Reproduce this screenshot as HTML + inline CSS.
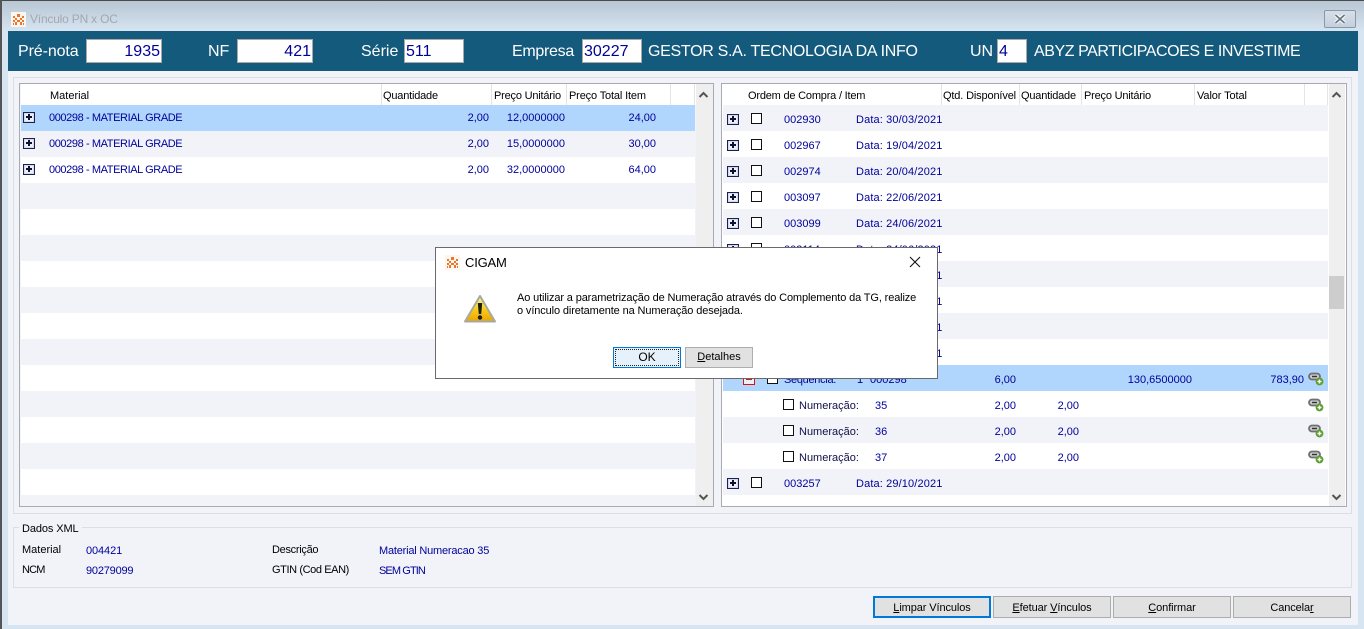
<!DOCTYPE html>
<html><head><meta charset="utf-8">
<style>
html,body{margin:0;padding:0;width:1364px;height:629px;overflow:hidden;background:#d7e5f2}
body{font-family:"Liberation Sans",sans-serif;font-size:11px;position:relative;color:#000}
div,span,svg{position:absolute;box-sizing:border-box}
.t{white-space:nowrap;line-height:14px;height:14px;margin-top:1px}
.b{color:#00009a}
.r{text-align:right}
.h{color:#fff;font-size:16px;line-height:20px;height:20px;top:42px;white-space:nowrap}
.f{background:#fff;border:1px solid #a9a9a9;height:24px;top:39px;color:#00009a;font-size:16px;line-height:24px;padding:0 1px}
.row{height:26px}
.g{background:#f1f3f9}.w{background:#fff}.s{background:#b0d6fd}
.sep{width:1px;height:21px;top:84px;background:#e4e4e4}
.px{width:12px;height:11px;border:1px solid #1a2050;background:#eef0f8;box-shadow:inset 0 0 0 1px #d4d8ec}
.px:before{content:"";position:absolute;left:2px;top:3px;width:6px;height:2px;background:#101030}
.px:after{content:"";position:absolute;left:4px;top:1px;width:2px;height:6px;background:#101030}
.ck{width:11px;height:11px;border:1px solid #111;background:#fff}
.btn{top:596px;height:22px;width:118px;background:#e1e1e1;border:1px solid #adadad;text-align:center;line-height:22px;white-space:nowrap;letter-spacing:-.1px}
.d{letter-spacing:.13px}
u{text-decoration:underline}
</style></head>
<body>
<!-- window frame -->
<div style="left:0;top:0;width:1364px;height:31px;background:linear-gradient(#b7c6d4,#d6e4f1)"></div>
<div style="left:0;top:0;width:1364px;height:1px;background:#4a4a4a"></div>
<div style="left:0;top:0;width:2px;height:629px;background:#555"></div>
<div style="left:8px;top:71px;width:1350px;height:554px;background:#f1f3f9"></div>
<div style="left:11px;top:12px;width:15px;height:15px;background:#fbf6f0"></div>
<svg style="left:12px;top:13px" width="13" height="13" viewBox="0 0 13 13"><path d="M5 1h3v2H5zM1 3h2v2H1zM10 3h2v2h-2zM3 5h2v2H3zM8 5h2v2H8zM5 3h3v1H5zM5 7h3v2H5zM1 7h2v2H1zM10 7h2v2h-2zM3 9h2v3H3zM8 9h2v3H8zM1 10h1v2H1zM11 10h1v2h-1z" fill="#ee7528"/></svg>
<div class="t" style="left:30px;top:11px;color:#a3a8ad;font-size:12px;letter-spacing:-.2px">Vínculo PN x OC</div>
<div style="left:1324px;top:10px;width:32px;height:18px;border:1px solid #8b97a5;border-radius:2px;background:linear-gradient(#d7e0e9,#c3d0dd)"></div>
<svg style="left:1333px;top:13px" width="14" height="12" viewBox="0 0 14 12"><path d="M2.5 2l9 8M11.5 2l-9 8" stroke="#fff" stroke-width="3.6" fill="none"/><path d="M2.5 2l9 8M11.5 2l-9 8" stroke="#6b7683" stroke-width="1.8" fill="none"/></svg>

<!-- header bar -->
<div style="left:8px;top:31px;width:1350px;height:40px;background:#145a7c"></div>
<div class="h" style="left:18px;letter-spacing:-.1px">Pré-nota</div>
<div class="f r" style="left:86px;width:76px">1935</div>
<div class="h" style="left:208px">NF</div>
<div class="f r" style="left:237px;width:76px">421</div>
<div class="h" style="left:361px">Série</div>
<div class="f" style="left:404px;width:60px">511</div>
<div class="h" style="left:512px;letter-spacing:-.3px">Empresa</div>
<div class="f" style="left:582px;width:60px">30227</div>
<div class="h" style="left:648px;letter-spacing:-.3px">GESTOR S.A. TECNOLOGIA DA INFO</div>
<div class="h" style="left:970px">UN</div>
<div class="f" style="left:997px;width:30px">4</div>
<div class="h" style="left:1034px;letter-spacing:-.43px">ABYZ PARTICIPACOES E INVESTIME</div>

<!-- group -->
<div style="left:13px;top:77px;width:1339px;height:437px;border:1px solid #dcdee3"></div>

<!-- left list -->
<div style="left:19px;top:83px;width:695px;height:424px;border:1px solid #a9abb0;background:#f1f3f9"></div>
<div style="left:21px;top:84px;width:675px;height:21px;background:#fff"></div>
<div class="row s" style="left:21px;top:105px;width:674px"></div>
<div class="row g" style="left:21px;top:131px;width:674px"></div>
<div class="row w" style="left:21px;top:157px;width:674px"></div>
<div class="row g" style="left:21px;top:183px;width:674px"></div>
<div class="row w" style="left:21px;top:209px;width:674px"></div>
<div class="row g" style="left:21px;top:235px;width:674px"></div>
<div class="row w" style="left:21px;top:261px;width:674px"></div>
<div class="row g" style="left:21px;top:287px;width:674px"></div>
<div class="row w" style="left:21px;top:313px;width:674px"></div>
<div class="row g" style="left:21px;top:339px;width:674px"></div>
<div class="row w" style="left:21px;top:365px;width:674px"></div>
<div class="row g" style="left:21px;top:391px;width:674px"></div>
<div class="row w" style="left:21px;top:417px;width:674px"></div>
<div class="row g" style="left:21px;top:443px;width:674px"></div>
<div class="row w" style="left:21px;top:469px;width:674px"></div>
<div class="sep" style="left:381px"></div><div class="sep" style="left:491px"></div><div class="sep" style="left:566px"></div><div class="sep" style="left:670px"></div><div class="sep" style="left:694px"></div>
<div class="t" style="left:50px;top:88px">Material</div>
<div class="t" style="left:383px;top:88px;letter-spacing:-.2px">Quantidade</div>
<div class="t" style="left:494px;top:88px;letter-spacing:-.2px">Preço Unitário</div>
<div class="t" style="left:569px;top:88px;letter-spacing:-.15px">Preço Total Item</div>
<div style="left:696px;top:84px;width:17px;height:422px;background:#efefef"></div>
<svg style="left:698px;top:90px" width="11" height="9" viewBox="0 0 11 9"><path d="M1.5 7L5.5 3l4 4" stroke="#555" stroke-width="2" fill="none"/></svg>
<svg style="left:698px;top:493px" width="11" height="9" viewBox="0 0 11 9"><path d="M1.5 2l4 4 4-4" stroke="#555" stroke-width="2" fill="none"/></svg>

<div class="px" style="left:23px;top:112px"></div>
<div class="t b" style="left:49px;top:110px;letter-spacing:-.4px">000298 - MATERIAL GRADE</div>
<div class="t b r" style="left:439px;top:110px;width:50px">2,00</div>
<div class="t b r" style="left:495px;top:110px;width:70px">12,0000000</div>
<div class="t b r" style="left:606px;top:110px;width:50px">24,00</div>
<div class="px" style="left:23px;top:138px"></div>
<div class="t b" style="left:49px;top:136px;letter-spacing:-.4px">000298 - MATERIAL GRADE</div>
<div class="t b r" style="left:439px;top:136px;width:50px">2,00</div>
<div class="t b r" style="left:495px;top:136px;width:70px">15,0000000</div>
<div class="t b r" style="left:606px;top:136px;width:50px">30,00</div>
<div class="px" style="left:23px;top:164px"></div>
<div class="t b" style="left:49px;top:162px;letter-spacing:-.4px">000298 - MATERIAL GRADE</div>
<div class="t b r" style="left:439px;top:162px;width:50px">2,00</div>
<div class="t b r" style="left:495px;top:162px;width:70px">32,0000000</div>
<div class="t b r" style="left:606px;top:162px;width:50px">64,00</div>

<!-- right list -->
<div style="left:721px;top:83px;width:626px;height:424px;border:1px solid #a9abb0;background:#fff"></div>
<div class="row g" style="left:723px;top:105px;width:605px"></div>
<div class="row g" style="left:723px;top:157px;width:605px"></div>
<div class="row g" style="left:723px;top:209px;width:605px"></div>
<div class="row g" style="left:723px;top:261px;width:605px"></div>
<div class="row g" style="left:723px;top:313px;width:605px"></div>
<div class="row s" style="left:723px;top:365px;width:605px"></div>
<div class="row g" style="left:723px;top:417px;width:605px"></div>
<div class="row g" style="left:723px;top:469px;width:605px"></div>
<div class="sep" style="left:941px"></div><div class="sep" style="left:1019px"></div><div class="sep" style="left:1081px"></div><div class="sep" style="left:1194px"></div><div class="sep" style="left:1304px"></div><div class="sep" style="left:1327px"></div>
<div class="t" style="left:748px;top:88px;letter-spacing:-.2px">Ordem de Compra / Item</div>
<div class="t" style="left:943px;top:88px;letter-spacing:-.15px">Qtd. Disponível</div>
<div class="t" style="left:1021px;top:88px;letter-spacing:-.2px">Quantidade</div>
<div class="t" style="left:1084px;top:88px;letter-spacing:-.2px">Preço Unitário</div>
<div class="t" style="left:1197px;top:88px;letter-spacing:-.1px">Valor Total</div>
<div style="left:1329px;top:84px;width:16px;height:422px;background:#efefef"></div>
<div style="left:1329px;top:276px;width:15px;height:33px;background:#cdcdcd"></div>
<svg style="left:1331px;top:90px" width="11" height="9" viewBox="0 0 11 9"><path d="M1.5 7L5.5 3l4 4" stroke="#555" stroke-width="2" fill="none"/></svg>
<svg style="left:1331px;top:493px" width="11" height="9" viewBox="0 0 11 9"><path d="M1.5 2l4 4 4-4" stroke="#555" stroke-width="2" fill="none"/></svg>

<div class="px" style="left:727px;top:114px"></div><div class="ck" style="left:751px;top:113px"></div><div class="t b" style="left:784px;top:112px">002930</div><div class="t b d" style="left:856px;top:112px">Data: 30/03/2021</div>
<div class="px" style="left:727px;top:140px"></div><div class="ck" style="left:751px;top:139px"></div><div class="t b" style="left:784px;top:138px">002967</div><div class="t b d" style="left:856px;top:138px">Data: 19/04/2021</div>
<div class="px" style="left:727px;top:166px"></div><div class="ck" style="left:751px;top:165px"></div><div class="t b" style="left:784px;top:164px">002974</div><div class="t b d" style="left:856px;top:164px">Data: 20/04/2021</div>
<div class="px" style="left:727px;top:192px"></div><div class="ck" style="left:751px;top:191px"></div><div class="t b" style="left:784px;top:190px">003097</div><div class="t b d" style="left:856px;top:190px">Data: 22/06/2021</div>
<div class="px" style="left:727px;top:218px"></div><div class="ck" style="left:751px;top:217px"></div><div class="t b" style="left:784px;top:216px">003099</div><div class="t b d" style="left:856px;top:216px">Data: 24/06/2021</div>
<div class="px" style="left:727px;top:244px"></div><div class="ck" style="left:751px;top:243px"></div><div class="t b" style="left:784px;top:242px">003114</div><div class="t b d" style="left:856px;top:242px">Data: 24/06/2021</div>
<div class="t b d" style="left:856px;top:268px">Data: 24/06/2021</div>
<div class="t b d" style="left:856px;top:294px">Data: 24/06/2021</div>
<div class="t b d" style="left:856px;top:320px">Data: 24/06/2021</div>
<div class="t b d" style="left:856px;top:346px">Data: 24/06/2021</div>

<div style="left:743px;top:372px;width:12px;height:13px;border:1px solid #e01010;background:#eef0f8"></div>
<div style="left:746px;top:378px;width:6px;height:2px;background:#c02020"></div>
<div class="ck" style="left:767px;top:373px"></div>
<div class="t b" style="left:784px;top:372px;letter-spacing:-.3px">Sequência:</div>
<div class="t b" style="left:857px;top:372px">1</div>
<div class="t b" style="left:870px;top:372px">000298</div>
<div class="t b r" style="left:966px;top:372px;width:50px">6,00</div>
<div class="t b r" style="left:1122px;top:372px;width:70px">130,6500000</div>
<div class="t b r" style="left:1254px;top:372px;width:50px">783,90</div>

<div class="ck" style="left:783px;top:399px"></div><div class="t" style="left:799px;top:398px;color:#10104a">Numeração:</div><div class="t b" style="left:875px;top:398px">35</div><div class="t b r" style="left:966px;top:398px;width:50px">2,00</div><div class="t b r" style="left:1029px;top:398px;width:50px">2,00</div>
<div class="ck" style="left:783px;top:425px"></div><div class="t" style="left:799px;top:424px;color:#10104a">Numeração:</div><div class="t b" style="left:875px;top:424px">36</div><div class="t b r" style="left:966px;top:424px;width:50px">2,00</div><div class="t b r" style="left:1029px;top:424px;width:50px">2,00</div>
<div class="ck" style="left:783px;top:451px"></div><div class="t" style="left:799px;top:450px;color:#10104a">Numeração:</div><div class="t b" style="left:875px;top:450px">37</div><div class="t b r" style="left:966px;top:450px;width:50px">2,00</div><div class="t b r" style="left:1029px;top:450px;width:50px">2,00</div>

<svg style="left:1308px;top:372px" width="16" height="14" viewBox="0 0 16 14"><rect x="1" y="1.5" width="11" height="6" rx="3" fill="#c8c8c8" stroke="#707070" stroke-width="1.8"/><path d="M4 4.5h5" stroke="#333" stroke-width="1.4"/><circle cx="11.5" cy="9.5" r="3.9" fill="#5c9e2e"/><path d="M9.5 9.5h4M11.5 7.5v4" stroke="#fff" stroke-width="1.4"/></svg>
<svg style="left:1308px;top:398px" width="16" height="14" viewBox="0 0 16 14"><rect x="1" y="1.5" width="11" height="6" rx="3" fill="#c8c8c8" stroke="#707070" stroke-width="1.8"/><path d="M4 4.5h5" stroke="#333" stroke-width="1.4"/><circle cx="11.5" cy="9.5" r="3.9" fill="#5c9e2e"/><path d="M9.5 9.5h4M11.5 7.5v4" stroke="#fff" stroke-width="1.4"/></svg>
<svg style="left:1308px;top:424px" width="16" height="14" viewBox="0 0 16 14"><rect x="1" y="1.5" width="11" height="6" rx="3" fill="#c8c8c8" stroke="#707070" stroke-width="1.8"/><path d="M4 4.5h5" stroke="#333" stroke-width="1.4"/><circle cx="11.5" cy="9.5" r="3.9" fill="#5c9e2e"/><path d="M9.5 9.5h4M11.5 7.5v4" stroke="#fff" stroke-width="1.4"/></svg>
<svg style="left:1308px;top:450px" width="16" height="14" viewBox="0 0 16 14"><rect x="1" y="1.5" width="11" height="6" rx="3" fill="#c8c8c8" stroke="#707070" stroke-width="1.8"/><path d="M4 4.5h5" stroke="#333" stroke-width="1.4"/><circle cx="11.5" cy="9.5" r="3.9" fill="#5c9e2e"/><path d="M9.5 9.5h4M11.5 7.5v4" stroke="#fff" stroke-width="1.4"/></svg>

<div class="px" style="left:727px;top:478px"></div><div class="ck" style="left:751px;top:477px"></div><div class="t b" style="left:784px;top:476px">003257</div><div class="t b d" style="left:856px;top:476px">Data: 29/10/2021</div>

<!-- dados xml -->
<div style="left:13px;top:527px;width:1339px;height:61px;border:1px solid #dcdee3"></div>
<div class="t" style="left:19px;top:521px;background:#f1f3f9;padding:0 3px;letter-spacing:-.1px">Dados XML</div>
<div class="t" style="left:22px;top:542px">Material</div>
<div class="t b" style="left:86px;top:543px;letter-spacing:-.1px">004421</div>
<div class="t" style="left:22px;top:562px;letter-spacing:-.8px">NCM</div>
<div class="t b" style="left:86px;top:563px;letter-spacing:-.2px">90279099</div>
<div class="t" style="left:272px;top:542px;letter-spacing:-.3px">Descrição</div>
<div class="t b" style="left:379px;top:543px;letter-spacing:-.2px">Material Numeracao 35</div>
<div class="t" style="left:272px;top:562px;letter-spacing:-.4px">GTIN (Cod EAN)</div>
<div class="t b" style="left:379px;top:563px;letter-spacing:-.9px">SEM GTIN</div>

<!-- buttons -->
<div class="btn" style="left:873px;border:2px solid #0078d7;line-height:20px"><u>L</u>impar Vínculos</div>
<div class="btn" style="left:993px"><u>E</u>fetuar <u>V</u>ínculos</div>
<div class="btn" style="left:1113px"><u>C</u>onfirmar</div>
<div class="btn" style="left:1233px">Cancela<u>r</u></div>

<!-- dialog -->
<div style="left:435px;top:247px;width:503px;height:132px;background:#fff;border:1px solid #6a6a6a"></div>
<div style="left:445px;top:255px;width:15px;height:15px;background:#fbf6f0"></div>
<svg style="left:446px;top:256px" width="13" height="13" viewBox="0 0 13 13"><path d="M5 1h3v2H5zM1 3h2v2H1zM10 3h2v2h-2zM3 5h2v2H3zM8 5h2v2H8zM5 3h3v1H5zM5 7h3v2H5zM1 7h2v2H1zM10 7h2v2h-2zM3 9h2v3H3zM8 9h2v3H8zM1 10h1v2H1zM11 10h1v2h-1z" fill="#ee7528"/></svg>
<div class="t" style="left:465px;top:255px;font-size:13px;letter-spacing:-.2px">CIGAM</div>
<svg style="left:908px;top:255px" width="14" height="14" viewBox="0 0 14 14"><path d="M2 2l10 10M12 2L2 12" stroke="#111" stroke-width="1.1" fill="none"/></svg>
<svg style="left:463px;top:294px" width="34" height="30" viewBox="0 0 34 30"><defs><linearGradient id="w" x1="0" y1="0" x2="0" y2="1"><stop offset="0" stop-color="#fff8b0"/><stop offset=".45" stop-color="#fbd31e"/><stop offset="1" stop-color="#eda400"/></linearGradient></defs><path d="M17 2L32 27.5H2z" fill="url(#w)" stroke="#a8a8a0" stroke-width="2" stroke-linejoin="round"/><path d="M14.8 9h4.4l-1 11h-2.4z" fill="#1c1c1c"/><circle cx="17" cy="23.5" r="2.2" fill="#1c1c1c"/></svg>
<div class="t" style="left:517px;top:290px;letter-spacing:-.13px">Ao utilizar a parametrização de Numeração através do Complemento da TG, realize</div>
<div class="t" style="left:517px;top:303px;letter-spacing:-.12px">o vínculo diretamente na Numeração desejada.</div>
<div style="left:613px;top:347px;width:68px;height:21px;background:#e5f1fb;border:1px solid #0078d7;outline:1px dotted #222;outline-offset:-3px;text-align:center;line-height:19px;font-size:12px">OK</div>
<div style="left:685px;top:347px;width:68px;height:21px;background:#e1e1e1;border:1px solid #adadad;text-align:center;line-height:19px"><u>D</u>etalhes</div>
</body></html>
